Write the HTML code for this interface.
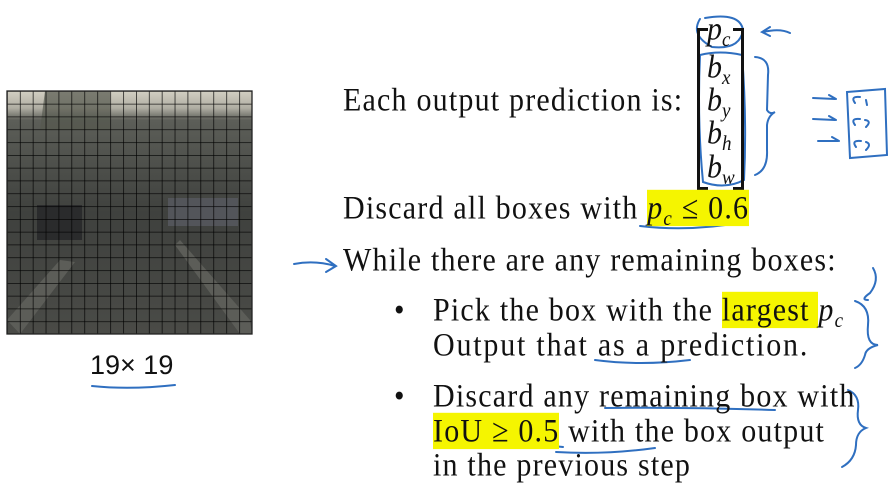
<!DOCTYPE html>
<html><head><meta charset="utf-8"><style>
body{margin:0;width:891px;height:487px;background:#fff;position:relative;overflow:hidden;font-family:"Liberation Serif",serif;color:#111}
.t{position:absolute;font-size:30px;letter-spacing:1.2px;white-space:nowrap;line-height:1;transform:scaleY(1.1);transform-origin:0 0}
.hl{background:#f5f500}
i{font-style:italic}
sub{font-size:19px;font-style:italic;vertical-align:-6px}
</style></head><body>
<svg width="891" height="487" style="position:absolute;left:0;top:0">
<defs>
<linearGradient id="g" x1="0" y1="0" x2="0" y2="1">
<stop offset="0" stop-color="#d2cfc2"/><stop offset="0.07" stop-color="#b0aea3"/><stop offset="0.12" stop-color="#5c5e58"/><stop offset="0.5" stop-color="#3f413e"/><stop offset="1" stop-color="#4a4b47"/></linearGradient>
<pattern id="grid" x="7" y="91" width="12.9" height="12.8" patternUnits="userSpaceOnUse"><path d="M0 0H12.9M0 0V12.8" stroke="#000" stroke-width="1.3" fill="none"/></pattern>
</defs>
<rect x="7" y="91" width="245" height="243" fill="url(#g)"/>
<path d="M45 91 L110 91 L110 130 L40 130Z" fill="#55584f" opacity="0.7"/>
<path d="M7 320 L60 260 L75 262 L20 334Z M180 240 L250 320 L252 334 L240 334 L175 245Z" fill="#5c5d58"/>
<rect x="37" y="205" width="45" height="35" fill="#2a2b2c"/>
<rect x="168" y="198" width="70" height="28" fill="#53555a"/>
<rect x="7" y="91" width="245" height="243" fill="url(#grid)"/>
<rect x="7" y="91" width="245" height="243" fill="none" stroke="#222" stroke-width="1.3"/>
<g fill="none" stroke="#2f6fc0" stroke-width="2" stroke-linecap="round">
<path d="M92 386 Q130 390 175 385"/>
<path d="M640 226 Q690 232 745 222"/>
<path d="M294 264 Q315 260 335 266 M326 259 L336 266 L326 272"/>
<path d="M700 19 Q690 35 712 47 Q740 50 743 30 Q740 12 705 18"/>
<path d="M790 33 Q780 28 763 32 M770 27 L762 32 L770 36"/>
<path d="M700 55 Q697 120 703 182 Q725 190 744 180 Q747 120 742 55 Q720 50 700 55"/>
<path d="M755 57 Q770 58 768 75 L767 110 Q770 115 775 112 Q768 116 767 125 L767 150 Q768 170 755 175"/>
<path d="M813 98 L835 99 M829 95 L836 99 M813 119 L835 120 M829 116 L836 120 M818 141 L838 141 M832 137 L839 141"/>
<path d="M847 92 L885 89 L887 155 L850 158 Z"/>
<path d="M855 103 Q850 96 860 97 M866 100 L867 105 M855 125 Q850 118 860 119 M865 120 Q872 121 866 127 M856 147 Q851 140 861 141 M866 142 Q872 144 866 150"/>
<path d="M873 268 Q880 280 870 293 Q860 300 868 300"/>
<path d="M855 301 Q870 306 868 325 Q866 345 878 345 Q866 348 865 355 Q862 365 855 368"/>
<path d="M435 446 Q500 440 563 447"/>
<path d="M556 452 Q605 455 655 448"/>
<path d="M605 408 Q690 407 775 410"/>
<path d="M595 360 Q640 366 690 360"/>
<path d="M848 390 Q860 395 858 410 Q856 425 866 428 Q856 432 856 445 Q855 460 842 467"/>
</g>
</svg>
<div style="position:absolute;left:90px;top:352px;font-family:'Liberation Sans',sans-serif;font-size:27px;line-height:1">19× 19</div>
<!-- matrix -->
<div style="position:absolute;left:697px;top:28px;width:8px;height:156px;border:3px solid #111;border-right:none"></div>
<div style="position:absolute;left:733px;top:28px;width:8px;height:156px;border:3px solid #111;border-left:none"></div>
<div class="t" style="left:707px;top:13px;letter-spacing:0"><i>p</i><sub>c</sub></div>
<div class="t" style="left:707px;top:51px;letter-spacing:0"><i>b</i><sub>x</sub></div>
<div class="t" style="left:707px;top:84px;letter-spacing:0"><i>b</i><sub>y</sub></div>
<div class="t" style="left:707px;top:117px;letter-spacing:0"><i>b</i><sub>h</sub></div>
<div class="t" style="left:707px;top:151px;letter-spacing:0"><i>b</i><sub>w</sub></div>
<div class="t" style="left:343px;top:84px">Each output prediction is:</div>
<div class="t" style="left:343px;top:192px">Discard all boxes with <span class="hl"><i>p</i><sub>c</sub> ≤ 0.6</span></div>
<div class="t" style="left:343px;top:244px">While there are any remaining boxes:</div>
<div class="t" style="left:394px;top:294px">•</div>
<div class="t" style="left:433px;top:294px">Pick the box with the <span class="hl">largest </span><i>p</i><sub>c</sub></div>
<div class="t" style="left:433px;top:329px;letter-spacing:1.8px">Output that as a prediction.</div>
<div class="t" style="left:394px;top:380px">•</div>
<div class="t" style="left:433px;top:380px">Discard any remaining box with</div>
<div class="t" style="left:433px;top:415px"><span class="hl">IoU ≥ 0.5</span> with the box output</div>
<div class="t" style="left:433px;top:449px">in the previous step</div>
</body></html>
